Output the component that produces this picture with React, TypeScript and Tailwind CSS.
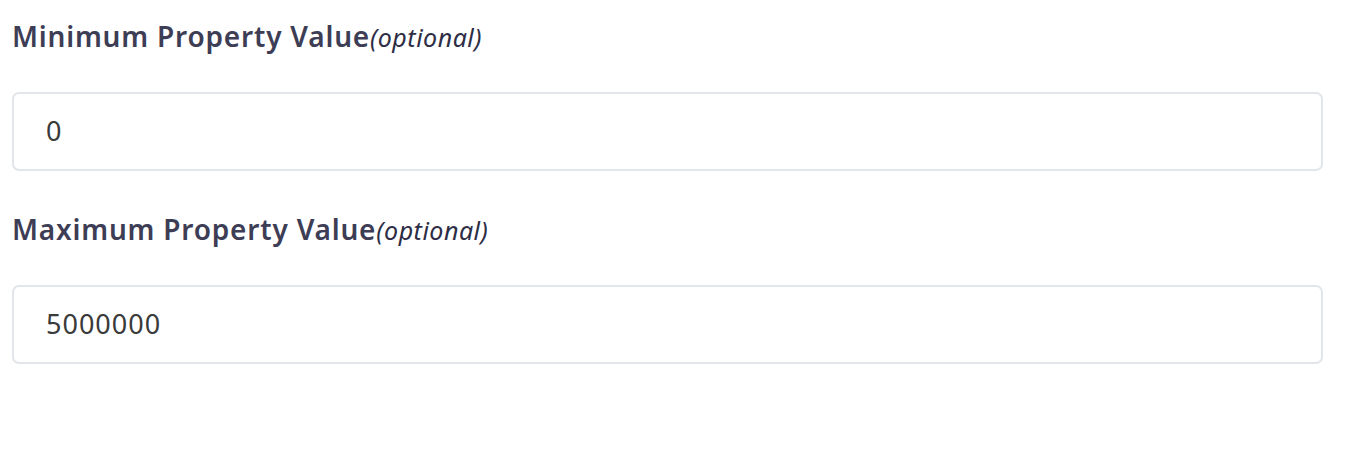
export default function App() {
  const fields = [
    { label: "Minimum Property Value", value: "0" },
    { label: "Maximum Property Value", value: "5000000" },
  ];
  return (
    <div className="bg-white w-[1350px] h-[470px] px-3 pt-[14px] font-['Noto_Sans','Open_Sans',sans-serif]">
      {fields.map((f) => (
        <div key={f.label} className="mb-[36px]">
          <label className="flex items-baseline h-[44px] text-[28px] font-semibold text-[#3d3d55] leading-[44px] tracking-[0.8px]">
            {f.label}
            <span className="text-[25px] font-normal italic text-[#2d2d45] tracking-[0.5px]">(optional)</span>
          </label>
          <div className="mt-[34px] h-[79px] w-[1311px] border-2 border-[#e2e5ea] rounded-[7px] flex items-center px-[32px] text-[27px] text-[#3a3a3a] tracking-[1px]">
            {f.value}
          </div>
        </div>
      ))}
    </div>
  );
}
